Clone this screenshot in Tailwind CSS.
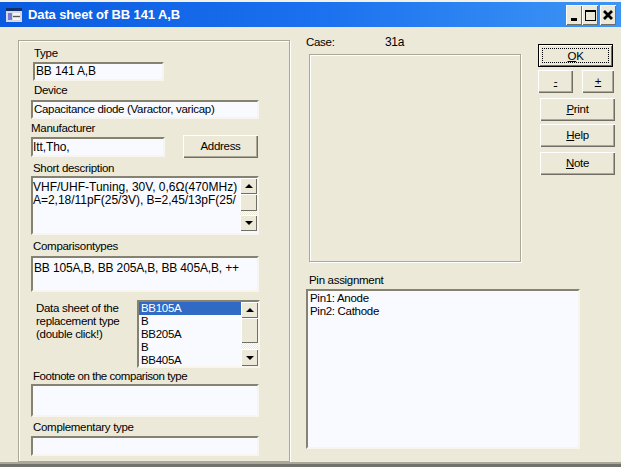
<!DOCTYPE html>
<html><head><meta charset="utf-8"><script src="https://cdn.jsdelivr.net/npm/@tailwindcss/browser@4"></script></head>
<body class="m-0 bg-[#ece9d8]">
<div class="w-[621px] h-[467px] overflow-hidden flex flex-col bg-[#ece9d8] text-black text-[11.5px] tracking-[-0.3px] leading-[14px] font-['Liberation_Sans',sans-serif]">
  <div class="h-[2px] shrink-0 bg-[#f4f2e8]"></div>
  <div class="h-[25px] shrink-0 flex items-center bg-gradient-to-r from-[#0a5be0] via-[#1a70ee] to-[#3d95f5]">
    <svg class="ml-[6px] w-[16px] h-[16px] shrink-0" viewBox="0 0 16 16"><rect x="0" y="1" width="16" height="14" fill="#d8d8e0"/><rect x="0" y="1" width="16" height="3" fill="#14306c"/><rect x="2" y="6" width="4" height="7" fill="#7a7ad8"/><rect x="7" y="6" width="7" height="2" fill="#f4f4f4"/><rect x="7" y="9" width="7" height="1" fill="#555"/><rect x="7" y="11" width="7" height="2" fill="#f4f4f4"/></svg>
    <span class="ml-[6px] text-white font-bold text-[13px] tracking-[-0.12px]">Data sheet of BB 141 A,B</span>
    <div class="ml-auto mr-[5px] mt-[1px] flex">
      <div class="w-[16px] h-[20px] bg-[#ece9d8] flex items-end justify-center pb-[4px] shadow-[inset_1px_1px_0_#fff,inset_-1px_-1px_0_#716f64]"><div class="w-[6px] h-[3px] bg-black"></div></div>
      <div class="w-[16px] h-[20px] bg-[#ece9d8] flex items-center justify-center shadow-[inset_1px_1px_0_#fff,inset_-1px_-1px_0_#716f64]"><div class="w-[11px] h-[11px] border border-black border-t-2"></div></div>
      <div class="ml-[2px] w-[16px] h-[20px] bg-[#ece9d8] flex items-center justify-center shadow-[inset_1px_1px_0_#fff,inset_-1px_-1px_0_#716f64]"><svg class="w-[10px] h-[10px]" viewBox="0 0 10 10"><path d="M1 1 9 9M9 1 1 9" stroke="#000" stroke-width="2.8"/></svg></div>
    </div>
  </div>
  <div class="flex-1 flex min-h-0">
    <div class="ml-[18px] mt-[13px] w-[272px] h-[422px] shrink-0 border border-[#aca899] shadow-[inset_1px_1px_0_#fff,1px_1px_0_#fff]">
      <div class="ml-[15px] mt-[5px] h-[14px]">Type</div>
      <div class="ml-[14px] mt-[2px] w-[131px] h-[19px] border-2 border-[#85836f] border-r-[#f7f5ee] border-b-[#f7f5ee] bg-[#f8faff] pl-[1px] text-[12px] tracking-[-0.15px]">BB 141 A,B</div>
      <div class="ml-[15px] mt-[2px] h-[14px]">Device</div>
      <div class="ml-[12px] mt-[3px] w-[228px] h-[19px] border-2 border-[#85836f] border-r-[#f7f5ee] border-b-[#f7f5ee] bg-[#f8faff] pl-[1px]">Capacitance diode (Varactor, varicap)</div>
      <div class="ml-[12px] mt-[2px] h-[14px]">Manufacturer</div>
      <div class="flex h-[23px] ml-[12px]">
        <div class="mt-[2px] w-[134px] h-[20px] border-2 border-[#85836f] border-r-[#f7f5ee] border-b-[#f7f5ee] bg-[#f8faff] leading-[16px] text-[12px] tracking-[-0.1px]">Itt,Tho,</div>
        <div class="ml-[18px] w-[75px] h-[23px] pb-[2px] bg-[#ece9d8] flex items-center justify-center shadow-[inset_1px_1px_0_#fff,inset_-1px_-1px_0_#716f64,inset_-2px_-2px_0_#aca899]">Address</div>
      </div>
      <div class="ml-[14px] mt-[3px] h-[14px]">Short description</div>
      <div class="ml-[12px] mt-[1px] w-[228px] h-[59px] flex border-2 border-[#85836f] border-r-[#f7f5ee] border-b-[#f7f5ee] bg-[#f8faff]">
        <div class="w-[207px] overflow-hidden whitespace-nowrap leading-[13px] pt-[3px] text-[12px] tracking-[0px]">VHF/UHF-Tuning, 30V, 0,6Ω(470MHz)<br><span class="tracking-[-0.03px]">A=2,18/11pF(25/3V), B=2,45/13pF(25/</span></div>
        <div class="w-[17px] flex flex-col">
          <div class="h-[16px] bg-[#ece9d8] flex items-center justify-center shadow-[inset_1px_1px_0_#fff,inset_-1px_-1px_0_#716f64]"><div class="border-x-[4px] border-x-transparent border-b-[4px] border-b-black"></div></div>
          <div class="h-[17px] bg-[#ece9d8] shadow-[inset_1px_1px_0_#fff,inset_-1px_-1px_0_#716f64]"></div>
          <div class="h-[4px] bg-[repeating-conic-gradient(#ece9d8_0_25%,#fff_0_50%)] bg-size-[2px_2px]"></div>
          <div class="h-[16px] bg-[#ece9d8] flex items-center justify-center shadow-[inset_1px_1px_0_#fff,inset_-1px_-1px_0_#716f64]"><div class="border-x-[4px] border-x-transparent border-t-[4px] border-t-black"></div></div>
        </div>
      </div>
      <div class="ml-[14px] mt-[4px] h-[14px]">Comparisontypes</div>
      <div class="ml-[12px] mt-[3px] w-[228px] h-[36px] border-2 border-[#85836f] border-r-[#f7f5ee] border-b-[#f7f5ee] bg-[#f8faff] pl-[1px] pt-[3px] text-[12px] tracking-[-0.15px]">BB 105A,B, BB 205A,B, BB 405A,B, ++</div>
      <div class="flex mt-[8px] h-[68px]">
        <div class="ml-[17px] w-[101px] pt-[2px] leading-[13px]">Data sheet of the<br>replacement type<br>(double click!)</div>
        <div class="w-[123px] h-[68px] flex border-2 border-[#85836f] border-r-[#f7f5ee] border-b-[#f7f5ee] bg-[#f8faff]">
          <div class="w-[103px] h-[64px] overflow-hidden leading-[13px]">
            <div class="bg-[#316ac5] text-white pl-[2px]">BB105A</div>
            <div class="pl-[2px]">B</div>
            <div class="pl-[2px]">BB205A</div>
            <div class="pl-[2px]">B</div>
            <div class="pl-[2px]">BB405A</div>
          </div>
          <div class="w-[17px] flex flex-col">
            <div class="h-[16px] bg-[#ece9d8] flex items-center justify-center shadow-[inset_1px_1px_0_#fff,inset_-1px_-1px_0_#716f64]"><div class="border-x-[4px] border-x-transparent border-b-[4px] border-b-black"></div></div>
            <div class="h-[25px] bg-[#ece9d8] shadow-[inset_1px_1px_0_#fff,inset_-1px_-1px_0_#716f64]"></div>
            <div class="h-[6px] bg-[repeating-conic-gradient(#ece9d8_0_25%,#fff_0_50%)] bg-size-[2px_2px]"></div>
            <div class="h-[17px] bg-[#ece9d8] flex items-center justify-center shadow-[inset_1px_1px_0_#fff,inset_-1px_-1px_0_#716f64]"><div class="border-x-[4px] border-x-transparent border-t-[4px] border-t-black"></div></div>
          </div>
        </div>
      </div>
      <div class="ml-[14px] mt-[1px] h-[14px] tracking-[-0.45px]">Footnote on the comparison type</div>
      <div class="ml-[12px] mt-[1px] w-[228px] h-[33px] border-2 border-[#85836f] border-r-[#f7f5ee] border-b-[#f7f5ee] bg-[#f8faff]"></div>
      <div class="ml-[14px] mt-[3px] h-[14px]">Complementary type</div>
      <div class="ml-[12px] mt-[2px] w-[228px] h-[20px] border-2 border-[#85836f] border-r-[#f7f5ee] border-b-[#f7f5ee] bg-[#f8faff]"></div>
    </div>
    <div class="flex-1 min-w-0 pl-[16px]">
      <div class="flex h-[235px]">
        <div class="w-[215px] shrink-0">
          <div class="flex mt-[8px] h-[14px]"><span class="w-[79px]">Case:</span><span class="text-[12px]">31a</span></div>
          <div class="ml-[3px] mt-[5px] w-[212px] h-[208px] border border-[#aca899] shadow-[inset_1px_1px_0_#fff,1px_1px_0_#fff]"></div>
        </div>
        <div class="ml-[17px] mt-[17px] flex flex-col">
          <div class="w-[75px] h-[23px] border border-black bg-[#ece9d8] flex items-center justify-center shadow-[inset_1px_1px_0_#fff,inset_-1px_-1px_0_#716f64] p-[3px]"><div class="w-full h-full border border-dotted border-black flex items-center justify-center"><span><span class="underline">O</span>K</span></div></div>
          <div class="mt-[3px] flex h-[23px] w-[76px] justify-between">
            <div class="w-[35px] pb-[1px] bg-[#ece9d8] flex items-center justify-center shadow-[inset_1px_1px_0_#fff,inset_-1px_-1px_0_#716f64,inset_-2px_-2px_0_#aca899]"><span class="underline">-</span></div>
            <div class="w-[32px] pb-[1px] bg-[#ece9d8] flex items-center justify-center shadow-[inset_1px_1px_0_#fff,inset_-1px_-1px_0_#716f64,inset_-2px_-2px_0_#aca899]"><span class="underline">+</span></div>
          </div>
          <div class="ml-[2px] mt-[5px] w-[75px] h-[23px] pb-[2px] bg-[#ece9d8] flex items-center justify-center shadow-[inset_1px_1px_0_#fff,inset_-1px_-1px_0_#716f64,inset_-2px_-2px_0_#aca899]"><span><span class="underline">P</span>rint</span></div>
          <div class="ml-[2px] mt-[3px] w-[75px] h-[23px] pb-[2px] bg-[#ece9d8] flex items-center justify-center shadow-[inset_1px_1px_0_#fff,inset_-1px_-1px_0_#716f64,inset_-2px_-2px_0_#aca899]"><span><span class="underline">H</span>elp</span></div>
          <div class="ml-[2px] mt-[5px] w-[75px] h-[23px] pb-[2px] bg-[#ece9d8] flex items-center justify-center shadow-[inset_1px_1px_0_#fff,inset_-1px_-1px_0_#716f64,inset_-2px_-2px_0_#aca899]"><span><span class="underline">N</span>ote</span></div>
        </div>
      </div>
      <div class="ml-[3px] mt-[11px] h-[14px]">Pin assignment</div>
      <div class="mt-[2px] w-[274px] h-[160px] border-2 border-[#85836f] border-r-[#f7f5ee] border-b-[#f7f5ee] bg-[#f8faff] pl-[2px] pt-[1px] leading-[13px]">Pin1: Anode<br>Pin2: Cathode</div>
    </div>
  </div>
  <div class="h-[5px] shrink-0 border-t-2 border-[#aca899] bg-[#72726c]"></div>
</div>
</body></html>
